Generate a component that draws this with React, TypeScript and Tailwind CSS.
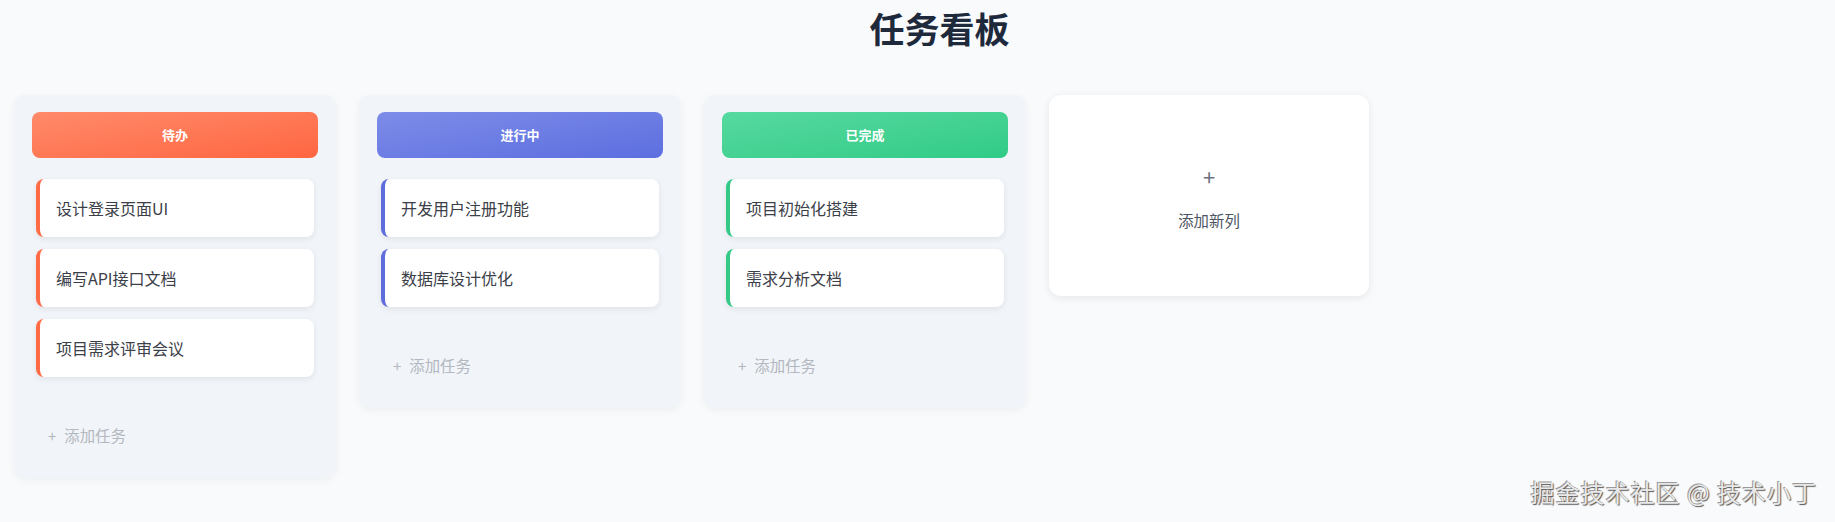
import React from 'react';

interface Column {
  title: string;
  headerClass: string;
  borderClass: string;
  tasks: string[];
}

const columns: Column[] = [
  {
    title: '待办',
    headerClass: 'bg-gradient-to-br from-[#ff8a6a] to-[#ff6540]',
    borderClass: 'border-[#ff6b45]',
    tasks: ['设计登录页面UI', '编写API接口文档', '项目需求评审会议'],
  },
  {
    title: '进行中',
    headerClass: 'bg-gradient-to-br from-[#7d8ce8] to-[#5d6ee0]',
    borderClass: 'border-[#5f6cdb]',
    tasks: ['开发用户注册功能', '数据库设计优化'],
  },
  {
    title: '已完成',
    headerClass: 'bg-gradient-to-br from-[#56d9a0] to-[#2fcb86]',
    borderClass: 'border-[#34c987]',
    tasks: ['项目初始化搭建', '需求分析文档'],
  },
];

const font = { fontFamily: '"Noto Sans CJK SC", "Noto Sans", sans-serif' };

const TaskCard: React.FC<{ text: string; borderClass: string }> = ({ text, borderClass }) => (
  <div
    className={`mx-1 flex h-[58px] items-center rounded-lg border-l-4 bg-white pl-4 text-[16px] text-[#3b4048] shadow-[0_2px_6px_rgba(0,0,0,0.08)] ${borderClass}`}
  >
    {text}
  </div>
);

const BoardColumn: React.FC<{ column: Column }> = ({ column }) => (
  <div className="w-[322px] shrink-0 rounded-xl bg-[#f1f4f8] px-[18px] pt-[17px] pb-[19px] shadow-[0_2px_8px_rgba(0,0,0,0.05)]">
    <div
      className={`flex h-[46px] items-center justify-center rounded-lg text-[13px] font-bold text-white ${column.headerClass}`}
    >
      {column.title}
    </div>
    <div className="mt-[21px] flex flex-col gap-3">
      {column.tasks.map((t) => (
        <TaskCard key={t} text={t} borderClass={column.borderClass} />
      ))}
    </div>
    <div className="mt-[36px] flex h-[46px] items-center gap-2 pl-[16px] text-[15.4px] text-[#b3b8c0]">
      <span className="text-[15px]">+</span>
      <span>添加任务</span>
    </div>
  </div>
);

export default function App() {
  return (
    <div className="relative min-h-[522px] bg-[#f8fafc]" style={font}>
      <h1 className="pt-[8px] pl-[44px] text-center text-[35px] font-bold leading-[40px] text-[#1e293b]">
        任务看板
      </h1>

      <div className="mt-[47px] flex items-start gap-[23px] pl-[14px]">
        {columns.map((c) => (
          <BoardColumn key={c.title} column={c} />
        ))}
        <div className="flex h-[201px] w-[320px] shrink-0 flex-col items-center justify-center rounded-xl bg-white pt-[6px] shadow-[0_2px_8px_rgba(0,0,0,0.08)]">
          <span className="text-[22px] leading-none text-[#6b7280]">+</span>
          <span className="mt-[22px] text-[15.4px] text-[#4b5563]">添加新列</span>
        </div>
      </div>

      <div className="absolute right-[18px] bottom-[18px] text-[24px] leading-none tracking-[1px] text-[#e8e8e8] [text-shadow:1px_1px_1px_#555,-1px_-1px_0_#999]">
        掘金技术社区 @ 技术小丁
      </div>
    </div>
  );
}
